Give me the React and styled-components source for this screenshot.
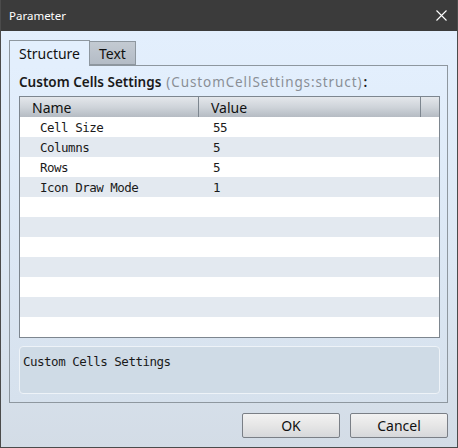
import React from "react";
import styled, { createGlobalStyle } from "styled-components";

const GlobalStyle = createGlobalStyle`
   html, body {
      margin: 0;
      padding: 0;
      background: #ffffff;
   }
`;

const rows = [
   { name: "Cell Size", value: "55" },
   { name: "Columns", value: "5" },
   { name: "Rows", value: "5" },
   { name: "Icon Draw Mode", value: "1" },
];

const Window = styled.div`
   width: 458px;
   height: 448px;
   box-sizing: border-box;
   display: flex;
   flex-direction: column;
   border: 1px solid #4b4b4b;
   border-top: none;
   font-family: "Noto Sans", "Open Sans", sans-serif;
   color: #1a1a1a;
`;

const TitleBar = styled.div`
   height: 31px;
   flex-shrink: 0;
   background: #3b3b3b;
   display: flex;
   align-items: center;
   justify-content: space-between;
   padding: 0 10px 0 8px;
   color: #ffffff;
   font-size: 11.5px;
`;

const CloseIcon = styled.svg`
   width: 11px;
   height: 11px;
   display: block;
`;

const Body = styled.div`
   flex: 1;
   display: flex;
   flex-direction: column;
   padding: 9px 9px 9px 8px;
   background: linear-gradient(180deg, #e3effd 0%, #dde8f4 55%, #d3dce6 100%);
`;

const TabBar = styled.div`
   display: flex;
   align-items: flex-end;
   height: 25px;
   position: relative;
   z-index: 1;
`;

const Tab = styled.div`
   height: ${(p) => (p.$active ? "26px" : "24px")};
   box-sizing: border-box;
   padding: 0 9px;
   display: flex;
   align-items: center;
   font-size: 14px;
   border: 1px solid #8e979f;
   border-bottom: ${(p) => (p.$active ? "none" : "1px solid #8e979f")};
   border-left: ${(p) => (p.$active ? "1px solid #8e979f" : "none")};
   margin-bottom: ${(p) => (p.$active ? "-1px" : "0")};
   background: ${(p) => (p.$active ? "#e3effd" : "linear-gradient(180deg, #c3cad2 0%, #b4bcc6 100%)")};
   color: #111;
`;

const Panel = styled.div`
   height: 338px;
   box-sizing: border-box;
   border: 1px solid #8e979f;
   background: linear-gradient(180deg, #e3effd 0%, #d6e1ed 100%);
   display: flex;
   flex-direction: column;
   padding: 0 7px 0 9px;
`;

const Label = styled.div`
   height: 30px;
   display: flex;
   align-items: center;
   padding-top: 2px;
   box-sizing: border-box;
   font-size: 13.5px;
   font-weight: 600;
   letter-spacing: 0;
   white-space: nowrap;
`;

const Muted = styled.span`
   color: #8a8f96;
   font-weight: 400;
   letter-spacing: 0.9px;
   margin-left: 5px;
   margin-right: 1px;
`;

const Table = styled.div`
   border: 1px solid #7d868f;
   background: #ffffff;
   display: flex;
   flex-direction: column;
`;

const HeaderRow = styled.div`
   display: grid;
   grid-template-columns: 179px 222px 1fr;
   height: 20px;
   background: linear-gradient(180deg, #e4e7eb 0%, #cfd4da 50%, #b5bbc3 100%);
`;

const HeaderCell = styled.div`
   display: flex;
   align-items: center;
   padding-left: 12px;
   font-size: 14px;
   color: #111;
   border-right: ${(p) => (p.$last ? "none" : "1px solid #7d868f")};
`;

const Row = styled.div`
   display: grid;
   grid-template-columns: 180px 1fr;
   height: 20px;
   background: ${(p) => (p.$alt ? "#e3e9f0" : "#ffffff")};
   font-family: "DejaVu Sans Mono", "Liberation Mono", monospace;
   font-size: 12.5px;
   letter-spacing: -0.5px;
   color: #1a1a1a;
`;

const Cell = styled.div`
   display: flex;
   align-items: center;
   padding-top: 1px;
   padding-left: ${(p) => p.$pad}px;
`;

const Description = styled.div`
   margin-top: 8px;
   height: 48px;
   box-sizing: border-box;
   border: 1px solid #eef3f8;
   border-radius: 4px;
   background: #cfdbe6;
   padding: 7px 3px;
   font-family: "DejaVu Sans Mono", "Liberation Mono", monospace;
   font-size: 12.5px;
   letter-spacing: -0.5px;
   color: #1a1a1a;
`;

const ButtonRow = styled.div`
   display: flex;
   justify-content: flex-end;
   gap: 10px;
   margin-top: 10px;
`;

const Button = styled.button`
   width: 98px;
   height: 25px;
   box-sizing: border-box;
   border: 1px solid #7a7f86;
   border-radius: 2px;
   background: linear-gradient(180deg, #f2f2f2 0%, #e6e6e6 50%, #d6d8db 100%);
   font-family: "Noto Sans", "Open Sans", sans-serif;
   font-size: 14px;
   color: #111;
   padding: 0;
`;

export default function App() {
   const filled = [...rows];
   while (filled.length < 11) filled.push({ name: "", value: "" });
   return (
      <>
         <GlobalStyle />
         <Window>
            <TitleBar>
               <span>Parameter</span>
               <CloseIcon viewBox="0 0 11 11">
                  <path d="M0.5 0.5 L10.5 10.5 M10.5 0.5 L0.5 10.5" stroke="#ffffff" strokeWidth="1.1" fill="none" />
               </CloseIcon>
            </TitleBar>
            <Body>
               <TabBar>
                  <Tab $active>Structure</Tab>
                  <Tab>Text</Tab>
               </TabBar>
               <Panel>
                  <Label>
                     Custom Cells Settings<Muted>(CustomCellSettings:struct)</Muted>:
                  </Label>
                  <Table>
                     <HeaderRow>
                        <HeaderCell>Name</HeaderCell>
                        <HeaderCell>Value</HeaderCell>
                        <HeaderCell $last />
                     </HeaderRow>
                     {filled.map((r, i) => (
                        <Row key={i} $alt={i % 2 === 1}>
                           <Cell $pad={20}>{r.name}</Cell>
                           <Cell $pad={13}>{r.value}</Cell>
                        </Row>
                     ))}
                  </Table>
                  <Description>Custom Cells Settings</Description>
               </Panel>
               <ButtonRow>
                  <Button>OK</Button>
                  <Button>Cancel</Button>
               </ButtonRow>
            </Body>
         </Window>
      </>
   );
}
